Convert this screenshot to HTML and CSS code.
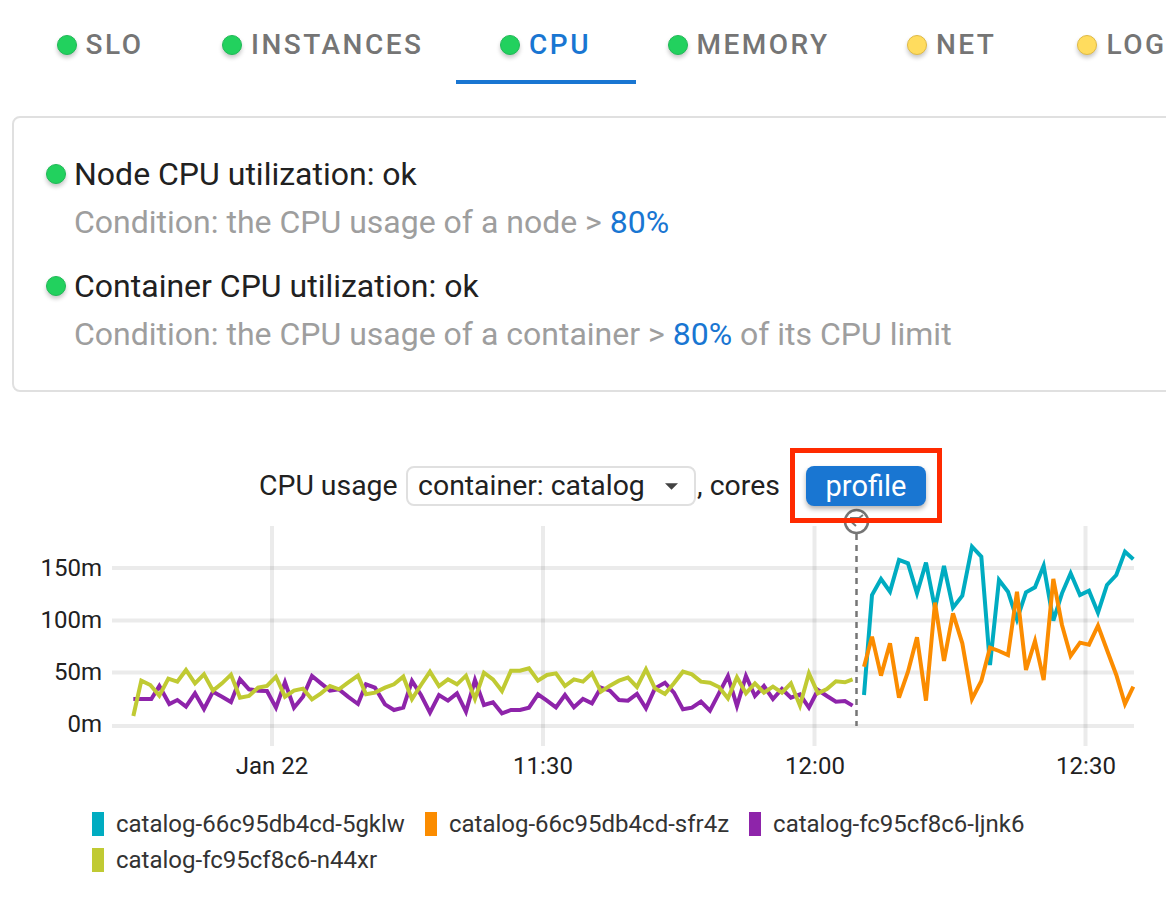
FILE: index.html
```html
<!DOCTYPE html>
<html lang="en">
<head>
<meta charset="utf-8">
<title>CPU</title>
<link rel="stylesheet" href="styles.css">
</head>
<body>
<nav class="tabs">
  <a class="tab"><i class="dot ok"></i>SLO</a>
  <a class="tab"><i class="dot ok"></i>INSTANCES</a>
  <a class="tab active"><i class="dot ok"></i>CPU</a>
  <a class="tab"><i class="dot ok"></i>MEMORY</a>
  <a class="tab"><i class="dot warn"></i>NET</a>
  <a class="tab"><i class="dot warn"></i>LOGS</a>
</nav>
<section class="card">
  <div class="check">
    <div class="check-title"><i class="dot ok big"></i>Node CPU utilization: ok</div>
    <div class="check-cond">Condition: the CPU usage of a node &gt; <span class="link">80%</span></div>
  </div>
  <div class="check">
    <div class="check-title"><i class="dot ok big"></i>Container CPU utilization: ok</div>
    <div class="check-cond">Condition: the CPU usage of a container &gt; <span class="link">80%</span> of its CPU limit</div>
  </div>
</section>
<section class="panel">
  <div class="panel-head">
    <span>CPU usage</span>
    <span class="select">container: catalog<svg class="caret" width="13" height="7" viewBox="0 0 10 5"><path d="M0 0h10L5 5z"/></svg></span>
    <span class="cores">, cores</span>
    <span class="profile-box"><button class="profile">profile</button></span>
  </div>
  <svg class="chart" width="1166" height="300" viewBox="0 506 1166 300">
    <g class="grid">
      <path d="M112 568H1134M112 620.500H1134M112 672.500H1134M112 726H1134"/>
      <path d="M272 526V746M543 526V746M814.500 526V746M1085.500 526V746"/>
    </g>
    <g class="ylabels">
      <text x="102" y="576">150m</text>
      <text x="102" y="628">100m</text>
      <text x="102" y="680">50m</text>
      <text x="102" y="732">0m</text>
    </g>
    <g class="xlabels">
      <text x="272" y="774">Jan 22</text>
      <text x="543" y="774">11:30</text>
      <text x="815" y="774">12:00</text>
      <text x="1086" y="774">12:30</text>
    </g>
    <path class="marker" d="M856.500 534V726"/>
    <g class="series" transform="translate(120 640) scale(.3333)">
      <path class="purple" d="M40 177 67 177 94 177 118 138 148 192 172 180 198 200 225 160 252 207 279 155 306 170 333 186 360 118 387 148 414 152 441 153 468 203 495 127 522 203 549 170 576 108 603 130 630 152 657 148 684 170 714 192 738 133 765 143 795 193 822 210 850 203 876 123 903 165 930 218 957 165 984 182 1011 160 1038 215 1065 120 1092 195 1119 187 1146 220 1173 210 1200 210 1227 203 1254 163 1281 182 1308 202 1335 165 1362 202 1389 177 1416 190 1443 143 1470 152 1497 180 1524 182 1551 162 1578 205 1605 145 1635 128 1662 158 1689 208 1716 203 1743 185 1770 212 1797 160 1824 108 1851 198 1878 108 1905 168 1932 138 1959 177 1986 147 2013 173 2040 163 2067 203 2094 150 2121 168 2148 185 2175 183 2198 197"/>
      <path class="olive" d="M40 228 64 122 91 135 118 167 145 116 172 125 198 90 225 130 252 103 279 152 306 130 333 104 360 173 387 168 414 143 441 138 468 110 495 170 522 152 549 146 576 178 603 160 630 138 657 148 684 128 714 107 738 163 765 158 795 143 822 133 850 110 876 177 903 135 930 95 957 138 984 118 1011 133 1038 107 1065 177 1092 98 1119 118 1146 153 1173 92 1200 92 1227 85 1254 122 1281 105 1308 100 1335 138 1362 118 1389 125 1416 100 1443 155 1470 137 1497 122 1524 113 1551 141 1578 88 1605 145 1635 162 1662 130 1689 95 1716 103 1743 125 1770 128 1797 141 1824 175 1851 112 1878 160 1905 130 1932 158 1959 140 1986 158 2013 130 2040 197 2067 100 2094 160 2121 147 2148 124 2175 127 2198 118"/>
    </g>
    <g class="series" transform="translate(840 530) scale(.3333)">
      <path class="teal" d="M72 495 96 195 123 147 150 185 177 90 204 100 231 190 258 98 285 235 312 108 339 233 367 197 396 50 424 80 450 405 477 150 504 185 531 268 558 187 585 172 611 107 640 272 666 190 692 130 720 195 747 182 774 248 801 165 829 135 855 65 880 88"/>
      <path class="orange" d="M72 410 96 320 123 437 150 340 177 503 204 425 231 322 258 512 285 218 312 393 339 250 367 340 396 507 424 453 450 353 477 363 504 375 531 185 558 420 585 333 611 450 640 147 666 285 692 378 720 338 747 344 774 287 801 360 829 435 855 522 880 470"/>
    </g>
    <g class="annot">
      <circle cx="856.500" cy="521.500" r="11.500"/>
      <path d="M863 522h-11M856 518l-4.500 4 4.500 4M850 518h9l4 -3"/>
    </g>
  </svg>
  <ul class="legend">
    <li><i class="swatch c-teal"></i>catalog-66c95db4cd-5gklw</li>
    <li><i class="swatch c-orange"></i>catalog-66c95db4cd-sfr4z</li>
    <li><i class="swatch c-purple"></i>catalog-fc95cf8c6-ljnk6</li>
    <li><i class="swatch c-olive"></i>catalog-fc95cf8c6-n44xr</li>
  </ul>
</section>
</body>
</html>
```
FILE: styles.css
```css
* { box-sizing: border-box; }
html, body { margin: 0; height: 900px; overflow: hidden; background: #fff; }
body { font-family: Roboto, "Liberation Sans", sans-serif; color: #212121; width: 1166px; }
.tabs { display: flex; height: 84px; padding-left: 10px; white-space: nowrap; overflow: hidden; }
.tab { display: flex; align-items: center; justify-content: center; flex: none; min-width: 180px; height: 84px; padding: 9px 32px 0; border-bottom: 4px solid transparent; font-size: 28px; font-weight: 500; letter-spacing: 2.5px; color: #757575; }
.active { color: #1976d2; border-bottom-color: #1976d2; }
.dot { display: inline-block; flex: none; width: 20px; height: 20px; margin-right: 9px; border-radius: 50%; box-shadow: 0 3px 4px rgba(0,0,0,.22); }
.dot.big { margin-right: 8px; }
.dot.ok { background: #22d15e; border: 1px solid #20b957; }
.dot.warn { background: #ffdc5e; border: 1.500px solid #dfba45; }
.card { margin: 32px 0 0 12px; width: 1180px; height: 276px; padding: 32px; border: 2px solid #e0e0e0; border-radius: 8px; }
.check { margin-bottom: 16px; }
.check-title { display: flex; align-items: center; font-size: 32px; line-height: 48px; height: 48px; }
.check-cond { font-size: 32px; line-height: 48px; height: 48px; padding-left: 28px; color: #9e9e9e; white-space: nowrap; }
.link { color: #1976d2; }
.panel { margin-top: 74px; position: relative; }
.panel-head { display: flex; align-items: center; height: 40px; padding-left: 259px; font-size: 28.400px; line-height: 38px; white-space: nowrap; }
.select { display: flex; align-items: center; justify-content: space-between; width: 290px; height: 40px; margin-left: 8.500px; padding: 0 16px 0 10px; border: 2px solid #e0e0e0; border-radius: 8px; }
.cores { margin-left: 1px; }
.caret { fill: #424242; }
.profile-box { display: flex; align-items: center; justify-content: center; position: absolute; left: 790px; top: -18px; width: 152px; height: 75px; padding-top: 1px; border: 5px solid #ff2a00; z-index: 2; }
.profile { width: 120px; height: 40px; border: 0; border-radius: 8px; background: #1976d2; color: #fff; font: 29px Roboto, sans-serif; padding: 0; box-shadow: 0 3px 5px rgba(0,0,0,.3); }
.chart { display: block; }
.grid path { fill: none; stroke: #000; stroke-opacity: .08; stroke-width: 4; }
.ylabels text { font-size: 24px; text-anchor: end; fill: #212121; }
.xlabels text { font-size: 24px; text-anchor: middle; fill: #212121; }
.marker { stroke: #757575; stroke-width: 2.500; stroke-dasharray: 6 5; fill: none; }
.series path { fill: none; stroke-width: 12; stroke-linejoin: miter; }
.teal { stroke: #00acc1; }
.orange { stroke: #fb8c00; }
.purple { stroke: #8e24aa; }
.olive { stroke: #c0ca33; }
.annot circle { fill: #fff; stroke: #757575; stroke-width: 2.500; }
.annot path { fill: none; stroke: #757575; stroke-width: 2; }
.legend { list-style: none; display: flex; flex-wrap: wrap; margin: 0; padding: 0 0 0 92px; width: 1100px; font-size: 24px; color: #333; }
.legend li { display: flex; align-items: center; height: 36px; margin-right: 20px; white-space: nowrap; }
.swatch { width: 12px; height: 24px; margin-right: 12px; }
.c-teal { background: #00acc1; }
.c-orange { background: #fb8c00; }
.c-purple { background: #8e24aa; }
.c-olive { background: #c0ca33; }
```
